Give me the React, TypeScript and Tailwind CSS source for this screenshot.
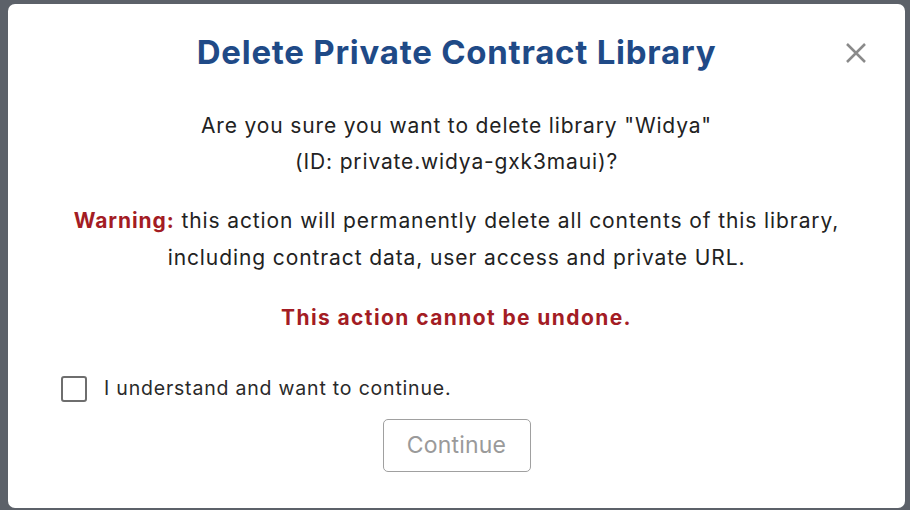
import React from "react";

export default function App() {
  return (
    <div
      className="w-[910px] h-[510px] bg-[#5c6169] flex pt-[4px] pl-[8px] pr-[5px] pb-[2px]"
      style={{ fontFamily: "Inter, 'Noto Sans', sans-serif" }}
    >
      <div className="flex-1 bg-white rounded-[7px] flex flex-col relative">
        <button className="absolute left-[836px] top-[37px] w-[24px] h-[24px] flex items-center justify-center">
          <svg width="22" height="22" viewBox="0 0 22 22">
            <path d="M2 2 L20 20 M20 2 L2 20" stroke="#8a8a8a" strokeWidth="2.5" strokeLinecap="butt" />
          </svg>
        </button>
        <h1 className="pt-[28px] text-center text-[33px] leading-[40px] font-bold text-[#1f4a87] tracking-[0.75px]">
          Delete Private Contract Library
        </h1>
        <p className="mt-[36px] text-center text-[21px] leading-[36px] text-[#222] tracking-[0.85px]">
          Are you sure you want to delete library "Widya"
          <br />
          (ID: private.widya-gxk3maui)?
        </p>
        <p className="mt-[22px] text-center text-[21px] leading-[37px] text-[#222] tracking-[0.9px]">
          <span className="font-bold text-[#a31c24]">Warning:</span> this action will permanently delete all contents of this library,
          <br />
          including contract data, user access and private URL.
        </p>
        <p className="mt-[24px] text-center text-[21px] leading-[36px] font-bold text-[#a31c24] tracking-[1.4px]">
          This action cannot be undone.
        </p>
        <label className="mt-[40px] ml-[53px] flex items-center gap-[17px] h-[26px]">
          <span className="w-[26px] h-[26px] border-[2.5px] border-[#6e6e6e] rounded-[3px] bg-white" />
          <span className="text-[19.5px] text-[#2a2a2a] tracking-[0.8px]">I understand and want to continue.</span>
        </label>
        <div className="mt-[17px] flex justify-center">
          <button className="w-[148px] h-[53px] border border-[#a0a0a0] rounded-[5px] text-[23px] text-[#9a9a9a] bg-white tracking-[0.2px]">
            Continue
          </button>
        </div>
      </div>
    </div>
  );
}
